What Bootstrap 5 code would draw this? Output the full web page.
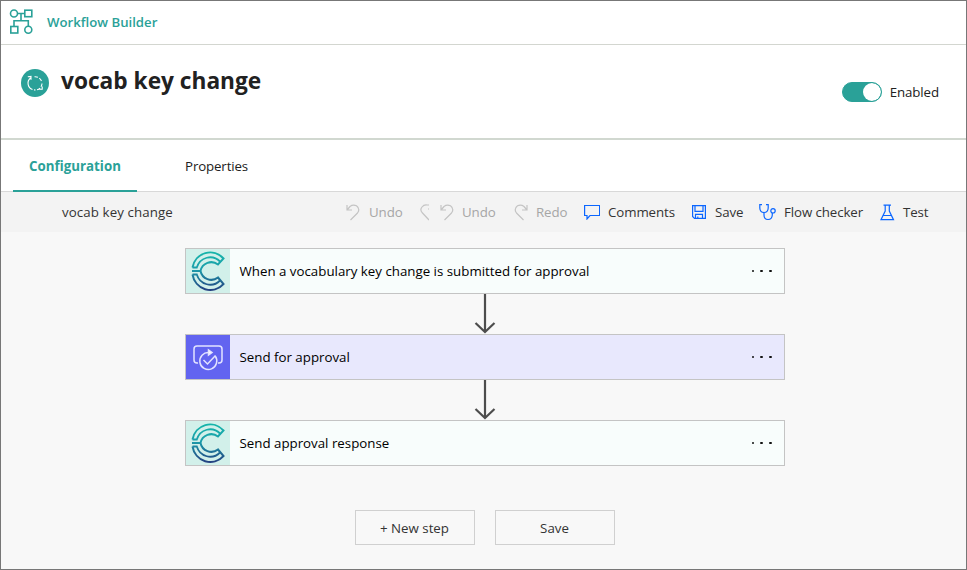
<!DOCTYPE html>
<html lang="en">
<head>
<meta charset="utf-8">
<meta name="viewport" content="width=device-width, initial-scale=1">
<title>Workflow Builder</title>
<link href="https://cdn.jsdelivr.net/npm/bootstrap@5.3.0/dist/css/bootstrap.min.css" rel="stylesheet">
<style>
:root{--teal:#2aa198}
body{font-family:"Open Sans","Noto Sans",sans-serif;font-size:13.3px;line-height:20px;color:#212121;background:#fff}
.app-frame{height:570px;border:1px solid #777;overflow:hidden}
.top-bar{height:44px;border-bottom:1px solid #d3d6d0;padding:0 0 2px 8px}
.brand{color:var(--teal);font-weight:600;font-size:13.2px;margin-left:14px}
.page-head{height:95px;border-bottom:2px solid #d1d8d0;padding-left:20px}
.page-head h1{font-size:22.7px;font-weight:700;line-height:32px;margin-left:12px;margin-top:20px}
.flow-badge{width:28px;height:28px;background:var(--teal);margin-top:24px}
.switch-box{margin:37px 27px 0 0}
.form-switch .form-check-input.switch:checked{width:40px;height:20px;margin:0 8px 0 0;border-color:var(--teal);background-color:var(--teal);background-size:24px 24px;background-position:right -3px center;background-repeat:no-repeat;box-shadow:none}
.t-enabled{letter-spacing:-.1px}
.flow-tabs{height:52px;border-bottom:1px solid #d8d8d8;padding-left:12px}
.flow-tabs .nav-link{height:52px;padding:16px 0 0;width:124px;text-align:center;color:#212121;border-radius:0}
.flow-tabs .nav-link.active{color:var(--teal);font-weight:700;border-bottom:2px solid var(--teal)}
.flow-tabs .nav-link+.nav-link{margin-left:17px;padding-left:1px;letter-spacing:-.15px}
.tool-bar{height:40px;background:#f3f3f3;color:#333;padding-left:61px}
.tool-title{width:284px;letter-spacing:.1px}
.tool{padding:0;border:0;background:none;color:#333;display:flex;align-items:center;white-space:nowrap;flex:none;letter-spacing:-.1px}
.tool span{padding-left:1px}
.tool:disabled{color:#a6a6a6}
.tool svg{flex:none;fill:none;stroke:#0b66ff;stroke-width:1.2}
.tool:disabled svg{stroke:#c4c4c4}
.w-undo{width:74px}.w-cut{width:20px}.w-redo{width:70px}.w-comments{width:108px}.w-save{width:67px}.w-check{width:121px}
.w-comments span,.w-check span,.w-cut+.w-undo span,.w-redo span{padding-left:0}
.designer{height:337px;background:#f8f8f8;padding:16px 0 0 2px}
.step{width:600px;height:46px;border:1px solid #c4c4c4;color:#000;background:#f8fdfc}
.step.approval{background:#e8e8fd}
.step-icon{width:44px;height:44px;background:#d2f0ea}
.step-icon svg{display:block}
.approval .step-icon{background:#6264f0}
.step-name{margin-left:10px}
.dots{margin-right:12px;gap:6px}
.dots i{width:2.6px;height:2.6px;background:#111;border-radius:1px}
.arrow{width:24px;height:40px;fill:none;stroke:#4d4d4d;stroke-width:2.2}
.actions{gap:20px}
.action{width:120px;height:35px;border:1px solid #d0d0d0;border-radius:0;background:#f8f8f8;font-size:13.3px;line-height:20px;padding:0;color:#333}
</style>
</head>
<body>
<svg width="0" height="0" class="position-absolute">
  <defs>
    <linearGradient id="cg" gradientUnits="userSpaceOnUse" x1="20" y1="3" x2="20" y2="42"><stop offset="0" stop-color="#16b5aa"/><stop offset=".45" stop-color="#1c9caa"/><stop offset="1" stop-color="#243e80"/></linearGradient>
    <symbol id="undo" viewBox="0 0 14 17"><path d="M1 1v5h5M1.500 5.500L4 2.500Q7 .2 10.500 1.800Q14.500 5 11.500 9L4.500 16"/></symbol>
    <symbol id="redo" viewBox="0 0 14 17"><path d="M13 1v5H8M12.500 5.500L10 2.500Q7 .2 3.500 1.800Q-.5 5 2.500 9L9.500 16"/></symbol>
    <symbol id="c-logo" viewBox="0 0 44 44"><g fill="none" stroke="url(#cg)" stroke-width="2">
      <path d="M6.500 18.500A18 18.500 0 0 1 37.500 9.500L32 15.500A11 11 0 0 0 14.500 22A11 11 0 0 0 32 28.500L37.500 35A18 18.500 0 0 1 6.500 25.500"/>
      <path d="M6.500 18.500H10.800A14 14.500 0 0 1 34 12.500M6.500 25.500H10.800A14 14.500 0 0 0 34 31.500M6 22H14.500" stroke-width="1.800"/></g></symbol>
  </defs>
</svg>
<div class="app-frame d-flex flex-column">
  <header class="top-bar d-flex align-items-center flex-shrink-0">
    <svg width="24" height="26" viewBox="0 0 24 26" fill="none" stroke="#2aa198" stroke-width="1.6"><circle cx="5" cy="4.500" r="3.500"/><rect x="15.800" y="1.200" width="7" height="6.500"/><path d="M8.500 4.500h7.300M12 4.500v7.300M5 17.500v-5.700h14.300v5.700"/><rect x="1.800" y="17.500" width="7" height="6.500"/><circle cx="19.300" cy="20.700" r="3.500"/></svg>
    <span class="brand">Workflow Builder</span>
  </header>
  <div class="page-head d-flex align-items-start flex-shrink-0">
    <div class="flow-badge rounded-circle d-flex align-items-center justify-content-center">
      <svg width="18" height="18" viewBox="0 0 18 18" fill="none" stroke="#fff" stroke-width="1.100"><path d="M6.500 15.500A6.700 6.700 0 0 1 4.500 4M1.800 2.800l3.200-.4v3.400"/><path d="M8.500 2.800A6.700 6.700 0 0 1 15.800 8" stroke-dasharray="3.500 1.500"/><path d="M16 9.500A6.700 6.700 0 0 1 8 15.900" stroke-dasharray="3.500 1.500"/><path d="M16.200 12.500v2.800h-3"/></svg>
    </div>
    <h1 class="mb-0">vocab key change</h1>
    <label class="switch-box d-flex align-items-center ms-auto form-switch p-0"><input class="form-check-input switch" type="checkbox" role="switch" checked><span class="t-enabled">Enabled</span></label>
  </div>
  <nav class="flow-tabs nav flex-nowrap flex-shrink-0">
    <a class="nav-link active" href="#">Configuration</a>
    <a class="nav-link" href="#">Properties</a>
  </nav>
  <div class="tool-bar d-flex align-items-center flex-shrink-0">
    <span class="tool-title flex-shrink-0">vocab key change</span>
    <button class="tool w-undo" disabled><svg width="14" height="17"><use href="#undo"/></svg><span class="ms-2">Undo</span></button>
    <button class="tool w-cut" disabled><svg width="9" height="17" viewBox="0 0 9 17"><path d="M9 1H7Q4 .5 2 3Q-.5 6 2.500 9L9 16M8 5h1"/></svg></button>
    <button class="tool w-undo" disabled><svg width="14" height="17"><use href="#undo"/></svg><span class="ms-2">Undo</span></button>
    <button class="tool w-redo" disabled><svg width="14" height="17"><use href="#redo"/></svg><span class="ms-2">Redo</span></button>
    <button class="tool w-comments"><svg width="16" height="16" viewBox="0 0 16 16"><path d="M.6 1.500h15v10H6L3 15v-3.500H.6z"/></svg><span class="ms-2">Comments</span></button>
    <button class="tool w-save"><svg width="14" height="16" viewBox="0 0 14 16"><path d="M.6 1.600h12.800v12.800H2.500L.6 12.500zM3 1.600v5.800h8V1.600M3.500 14.400v-4h7v4M5.800 14.400v-2"/></svg><span class="ms-2">Save</span></button>
    <button class="tool w-check"><svg width="17" height="18" viewBox="0 0 17 18"><path d="M3 1.600H.8V5Q1 9.500 5 9.500T9.200 5V1.600H7M5 9.500V12Q5 16.500 9 16.500T13.300 12v-2"/><circle cx="14" cy="7.800" r="2.200"/></svg><span class="ms-2">Flow checker</span></button>
    <button class="tool"><svg width="15" height="17" viewBox="0 0 15 17"><path d="M3.500 1.200h7.500M5.200 1.200V7L1 15.700h12.500L9.300 7V1.200M3.200 11.500h8.200"/></svg><span class="ms-2 ps-0">Test</span></button>
  </div>
  <main class="designer d-flex flex-column align-items-center">
    <div class="step d-flex align-items-center"><div class="step-icon"><svg width="44" height="44"><use href="#c-logo"/></svg></div><span class="step-name">When a vocabulary key change is submitted for approval</span><span class="dots d-flex ms-auto"><i></i><i></i><i></i></span></div>
    <svg class="arrow" viewBox="0 0 24 40"><path d="M12 0v38M2.500 29L12 38l9.500-9"/></svg>
    <div class="step approval d-flex align-items-center"><div class="step-icon"><svg width="44" height="44" viewBox="0 0 44 44" fill="none" stroke="#e2e3ff" stroke-width="1.500"><path d="M12 28h-1q-3 0-3-3V14q0-3 3-3h22q3 0 3 3v11q0 3-3 3h-1"/><path d="M25 17.500h-2a8.500 8.500 0 1 0 6.200 3.500"/><path d="M22.500 15v5l3.500-2.500z" fill="#fff"/><path d="M17.500 25l4 4 8-8.500"/></svg></div><span class="step-name">Send for approval</span><span class="dots d-flex ms-auto"><i></i><i></i><i></i></span></div>
    <svg class="arrow" viewBox="0 0 24 40"><path d="M12 0v38M2.500 29L12 38l9.500-9"/></svg>
    <div class="step d-flex align-items-center"><div class="step-icon"><svg width="44" height="44"><use href="#c-logo"/></svg></div><span class="step-name">Send approval response</span><span class="dots d-flex ms-auto"><i></i><i></i><i></i></span></div>
    <div class="d-flex mt-auto mb-4 actions"><button class="btn action">+ New step</button><button class="btn action">Save</button></div>
  </main>
</div>
<script src="https://cdn.jsdelivr.net/npm/bootstrap@5.3.0/dist/js/bootstrap.bundle.min.js"></script>
</body>
</html>
